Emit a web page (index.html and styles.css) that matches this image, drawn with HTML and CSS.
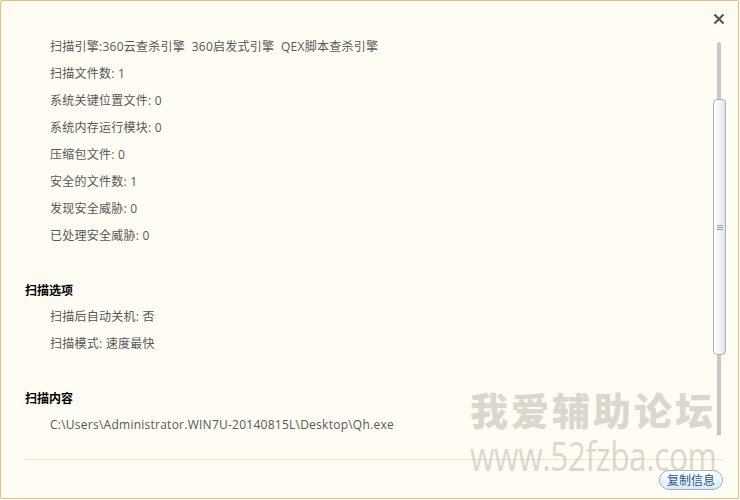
FILE: index.html
```html
<!DOCTYPE html>
<html lang="zh-CN">
<head>
<meta charset="utf-8">
<title>扫描日志</title>
<link rel="stylesheet" href="styles.css">
</head>
<body>
<div class="window">
  <div class="titlebar">
    <button class="close" aria-label="关闭">
      <svg width="12" height="12" viewBox="0 0 12 12"><path d="M1.5 1.5L10.5 10.5M10.5 1.5L1.5 10.5" stroke="#555" stroke-width="2.2" stroke-linecap="butt"/></svg>
    </button>
  </div>
  <div class="main">
    <div class="content">
      <div class="rows">
        <div class="row">扫描引擎:360云查杀引擎&nbsp;&nbsp;360启发式引擎&nbsp;&nbsp;QEX脚本查杀引擎</div>
        <div class="row">扫描文件数: 1</div>
        <div class="row">系统关键位置文件: 0</div>
        <div class="row">系统内存运行模块: 0</div>
        <div class="row">压缩包文件: 0</div>
        <div class="row">安全的文件数: 1</div>
        <div class="row">发现安全威胁: 0</div>
        <div class="row">已处理安全威胁: 0</div>
      </div>
      <div class="section">
        <div class="heading">扫描选项</div>
        <div class="row">扫描后自动关机: 否</div>
        <div class="row">扫描模式: 速度最快</div>
      </div>
      <div class="section">
        <div class="heading">扫描内容</div>
        <div class="row">C:\Users\Administrator.WIN7U-20140815L\Desktop\Qh.exe</div>
      </div>
    </div>
    <div class="scrollbar">
      <div class="track"></div>
      <div class="thumb"><span class="grip"></span></div>
    </div>
  </div>
  <div class="footer">
    <button class="copy">复制信息</button>
  </div>
  <div class="watermark">
    <div class="wm-cn">我爱辅助论坛</div>
    <div class="wm-en">www.52fzba.com</div>
  </div>
</div>
</body>
</html>
```
FILE: styles.css
```css
html, body {
  margin: 0;
  padding: 0;
  background: #fffcf3;
}
body {
  width: 740px;
  height: 500px;
  overflow: hidden;
  font-family: "Open Sans", "Noto Sans CJK SC", sans-serif;
}
.window {
  position: relative;
  box-sizing: border-box;
  width: 739px;
  height: 499px;
  border: 1px solid #dfc187;
  border-radius: 2px;
  background: #fffcf3;
  display: flex;
  flex-direction: column;
  overflow: hidden;
}
.titlebar {
  height: 32px;
  display: flex;
  justify-content: flex-end;
  align-items: flex-start;
  padding-right: 12px;
}
.close {
  margin-top: 11px;
  width: 14px;
  height: 14px;
  padding: 0;
  border: 0;
  background: transparent;
  display: flex;
  align-items: center;
  justify-content: center;
}
.main {
  display: flex;
  flex: 0 0 403px;
}
.content {
  flex: 1;
  padding-left: 24px;
  font-size: 12px;
  color: #575757;
}
.row {
  height: 27px;
  line-height: 27px;
  padding-left: 25px;
  white-space: nowrap;
  letter-spacing: 0.25px;
}
.section {
  margin-top: 27px;
}
.heading {
  height: 27px;
  line-height: 27px;
  font-family: "Noto Sans CJK SC", sans-serif;
  font-weight: bold;
  color: #000;
}
.scrollbar {
  position: relative;
  width: 14px;
  margin-right: 11px;
  margin-top: 9px;
  height: 393px;
}
.track {
  margin-left: 4px;
  width: 4px;
  height: 393px;
  background: #c7c7c7;
  border-radius: 2px 2px 0 0;
}
.thumb {
  position: absolute;
  left: 0;
  top: 57px;
  box-sizing: border-box;
  width: 13px;
  height: 256px;
  border: 1px solid #a7b2bf;
  border-radius: 4px;
  background: linear-gradient(to right, #ffffff 0%, #f6f7f9 40%, #dfe3e9 100%);
  display: flex;
  align-items: center;
  justify-content: center;
}
.grip {
  display: block;
  width: 6px;
  height: 5px;
  background: repeating-linear-gradient(to bottom, #9aa3ad 0 1px, transparent 1px 2px);
}
.footer {
  margin: 21px 15px 0 24px;
  border-top: 1px solid #e9e5cf;
  padding-top: 10px;
  display: flex;
  justify-content: flex-end;
}
.copy {
  width: 64px;
  height: 20px;
  padding: 0;
  border: 1px solid #98b2c8;
  border-radius: 10px;
  background: linear-gradient(to bottom, #ffffff 0%, #eef4f9 50%, #dce8f2 100%);
  font-family: "Noto Sans CJK SC", sans-serif;
  font-size: 12px;
  line-height: 18px;
  color: #1b5a96;
}
.watermark {
  position: absolute;
  left: 469px;
  top: 383px;
  width: 260px;
  pointer-events: none;
  color: rgba(200, 198, 188, 0.66);
}
.wm-cn {
  font-family: "Noto Sans CJK SC", sans-serif;
  font-weight: 900;
  font-size: 38px;
  line-height: 50px;
  letter-spacing: 3px;
  white-space: nowrap;
}
.wm-en {
  font-family: "Open Sans", sans-serif;
  font-size: 40px;
  line-height: 44px;
  letter-spacing: -0.5px;
  transform: scaleX(0.79);
  transform-origin: left top;
  white-space: nowrap;
}
```
